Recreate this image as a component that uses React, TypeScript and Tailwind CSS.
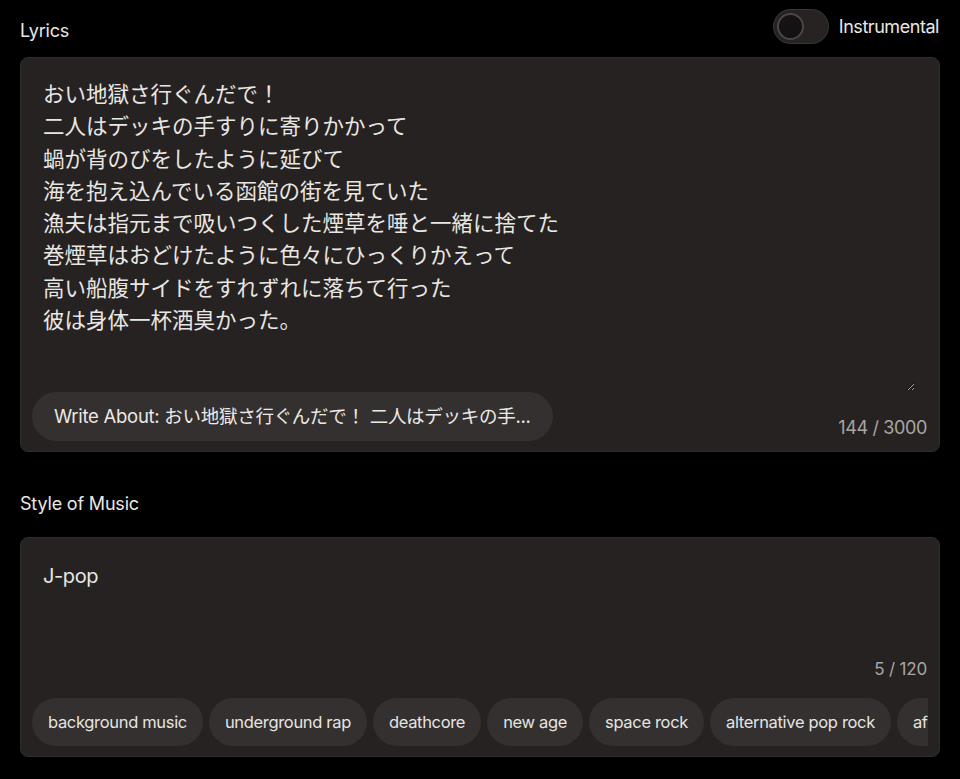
const LYRICS = `おい地獄さ行ぐんだで！
二人はデッキの手すりに寄りかかって
蝸が背のびをしたように延びて
海を抱え込んでいる函館の街を見ていた
漁夫は指元まで吸いつくした煙草を唾と一緒に捨てた
巻煙草はおどけたように色々にひっくりかえって
高い船腹サイドをすれずれに落ちて行った
彼は身体一杯酒臭かった。`;

const TAGS = [
  'background music',
  'underground rap',
  'deathcore',
  'new age',
  'space rock',
  'alternative pop rock',
  'afrobeat',
];

const FONT = "font-['Inter','Noto_Sans_CJK_JP',sans-serif]";

function Toggle() {
  return (
    <div className="flex h-[35px] w-[56px] items-center rounded-full border border-[#3a3736] bg-[#262322] pl-[3px]">
      <div className="h-[27px] w-[27px] rounded-full border-2 border-[#4a4746] bg-[#141212]" />
    </div>
  );
}

export default function App() {
  return (
    <div className={`min-h-[779px] w-[960px] bg-black px-5 text-[#e9e7e4] ${FONT}`}>
      {/* lyrics header */}
      <div className="flex h-[57px] items-start justify-between">
        <span className="mt-[20px] text-[18px] leading-[22px] tracking-[-0.01em]">Lyrics</span>
        <div className="mr-px mt-[9px] flex items-center gap-[10px]">
          <Toggle />
          <span className="text-[18px] leading-[22px] tracking-[-0.025em]">Instrumental</span>
        </div>
      </div>

      <div className="flex h-[395px] flex-col rounded-lg border border-[#2f2c2b] bg-[#252221]">
        <textarea
          defaultValue={LYRICS}
          className="block h-[333px] w-[894px] resize-y bg-transparent pl-[22px] pt-[20px] text-[21.5px] leading-[32.3px] text-[#e9e7e4] outline-none [color-scheme:dark]"
        />
        <div className="mt-px flex items-end justify-between pb-[10px] pl-[11px] pr-3">
          <button className="h-[49px] rounded-full bg-[#33302f] px-[22px] text-[18.5px] tracking-[-0.015em] text-[#ebe9e6]">
            Write About: おい地獄さ行ぐんだで！ 二人はデッキの手...
          </button>
          <span className="mb-[1px] text-[18px] leading-[24px] tracking-[-0.02em] text-[#a9a6a3]">144 / 3000</span>
        </div>
      </div>

      {/* style header */}
      <div className="flex h-[85px] items-end pb-[22px]">
        <span className="text-[18px] leading-[22px] tracking-[-0.01em]">Style of Music</span>
      </div>

      <div className="flex h-[220px] flex-col rounded-lg border border-[#2f2c2b] bg-[#252221]">
        <textarea
          defaultValue="J-pop"
          className="block h-[112px] w-full resize-none bg-transparent pl-[22px] pt-[22px] text-[20px] leading-[32px] tracking-[-0.02em] text-[#e9e7e4] outline-none"
        />
        <div className="mt-[7px] pr-3 text-right text-[17px] leading-[24px] tracking-[-0.01em] text-[#a9a6a3]">5 / 120</div>
        <div className="mx-[11px] mt-[17px] flex gap-[6px] overflow-hidden">
          {TAGS.map((tag) => (
            <span
              key={tag}
              className="flex h-[48px] shrink-0 items-center rounded-full bg-[#33302f] px-4 text-[16.5px] tracking-[-0.02em] text-[#e6e4e1]"
            >
              {tag}
            </span>
          ))}
        </div>
      </div>
    </div>
  );
}
